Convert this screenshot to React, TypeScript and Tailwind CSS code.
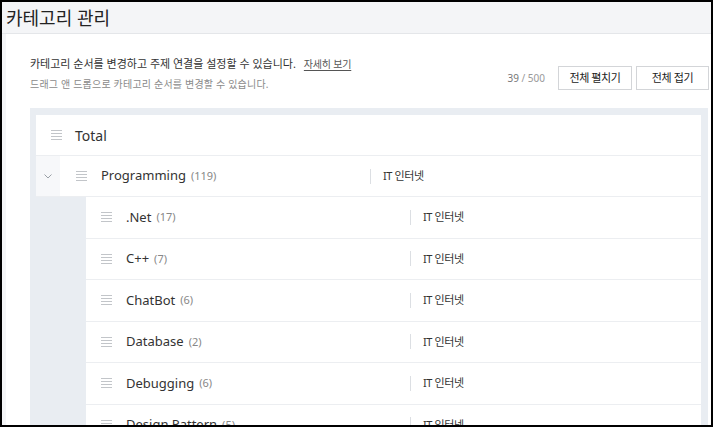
import React from 'react';

interface Category {
  name: string;
  count: number;
}

const children: Category[] = [
  { name: '.Net', count: 17 },
  { name: 'C++', count: 7 },
  { name: 'ChatBot', count: 6 },
  { name: 'Database', count: 2 },
  { name: 'Debugging', count: 6 },
  { name: 'Design Pattern', count: 5 },
];

const DragIcon: React.FC = () => (
  <svg width="11" height="10" viewBox="0 0 11 10" className="shrink-0">
    <g stroke="#c2c5c9" strokeWidth="1">
      <line x1="0" y1="0.5" x2="11" y2="0.5" />
      <line x1="0" y1="3.5" x2="11" y2="3.5" />
      <line x1="0" y1="6.5" x2="11" y2="6.5" />
      <line x1="0" y1="9.5" x2="11" y2="9.5" />
    </g>
  </svg>
);

const Chevron: React.FC = () => (
  <svg width="8" height="5" viewBox="0 0 8 5">
    <path d="M0.5 0.5 L4 4 L7.5 0.5" fill="none" stroke="#9aa0a6" strokeWidth="1" />
  </svg>
);

const Topic: React.FC = () => (
  <div className="flex items-center">
    <span className="h-[15px] w-px bg-[#dcdfe3]" />
    <span className="pl-[12px] text-[11px] tracking-[-0.4px] text-[#333]">IT 인터넷</span>
  </div>
);

const App: React.FC = () => {
  return (
    <div
      className="h-[427px] w-[713px] overflow-hidden border-2 border-black bg-[#f4f5f7] text-[#333]"
      style={{ fontFamily: '"Noto Sans", "Noto Sans CJK KR", sans-serif' }}
    >
      <div className="flex h-[32px] items-center border-b border-[#e4e6e9] pl-[4px] pt-[2px] text-[18px] text-[#222]">
        카테고리 관리
      </div>

      <div className="ml-[4px] h-full bg-white pl-[24px] pr-[2px] pt-[20px]">
        <div className="flex items-end justify-between">
          <div>
            <p className="flex h-[20px] items-center text-[11px] text-[#333]">
              카테고리 순서를 변경하고 주제 연결을 설정할 수 있습니다.
              <a className="ml-[8px] text-[10px] tracking-[-0.2px] text-[#555] underline underline-offset-2">
                자세히 보기
              </a>
            </p>
            <p className="flex h-[20px] items-center text-[10px] tracking-[0.2px] text-[#8a8a8a]">
              드래그 앤 드롭으로 카테고리 순서를 변경할 수 있습니다.
            </p>
          </div>
          <div className="flex items-center pb-[4px]">
            <span className="mr-[13px] text-[10px] text-[#999]">
              <span className="text-[#777]">39</span> / 500
            </span>
            <button className="mr-[4px] h-[24px] w-[74px] border border-[#d3d5d8] bg-white text-[11px] tracking-[-0.4px] text-[#222]">
              전체 펼치기
            </button>
            <button className="h-[24px] w-[73px] border border-[#d3d5d8] bg-white text-[11px] tracking-[-0.4px] text-[#222]">
              전체 접기
            </button>
          </div>
        </div>

        <div className="mr-[1px] mt-[14px] bg-[#e9edf2] pl-[6px] pr-[7px] pt-[7px]">
          <div className="flex h-[41px] items-center border-b border-[#eceef1] bg-white pl-[15px]">
            <DragIcon />
            <span className="pl-[13px] text-[14px] text-[#333]">Total</span>
          </div>

          <div className="flex h-[41px] border-b border-[#eceef1] bg-white">
            <div className="flex w-[24px] items-center justify-center bg-[#f7f8fa]">
              <Chevron />
            </div>
            <div className="flex w-[310px] items-center pl-[16px]">
              <DragIcon />
              <span className="pl-[14px] text-[13px] text-[#333]">Programming</span>
              <span className="pl-[5px] text-[11px] text-[#888]">(119)</span>
            </div>
            <Topic />
          </div>

          {children.map((c) => (
            <div key={c.name} className="flex h-[41.5px] pl-[50px]">
              <div className="flex flex-1 border-b border-[#eceef1] bg-white">
                <div className="flex w-[324px] items-center pl-[15px]">
                  <DragIcon />
                  <span className="pl-[14px] text-[13px] text-[#333]">{c.name}</span>
                  <span className="pl-[5px] text-[11px] text-[#888]">({c.count})</span>
                </div>
                <Topic />
              </div>
            </div>
          ))}
        </div>
      </div>
    </div>
  );
};

export default App;
